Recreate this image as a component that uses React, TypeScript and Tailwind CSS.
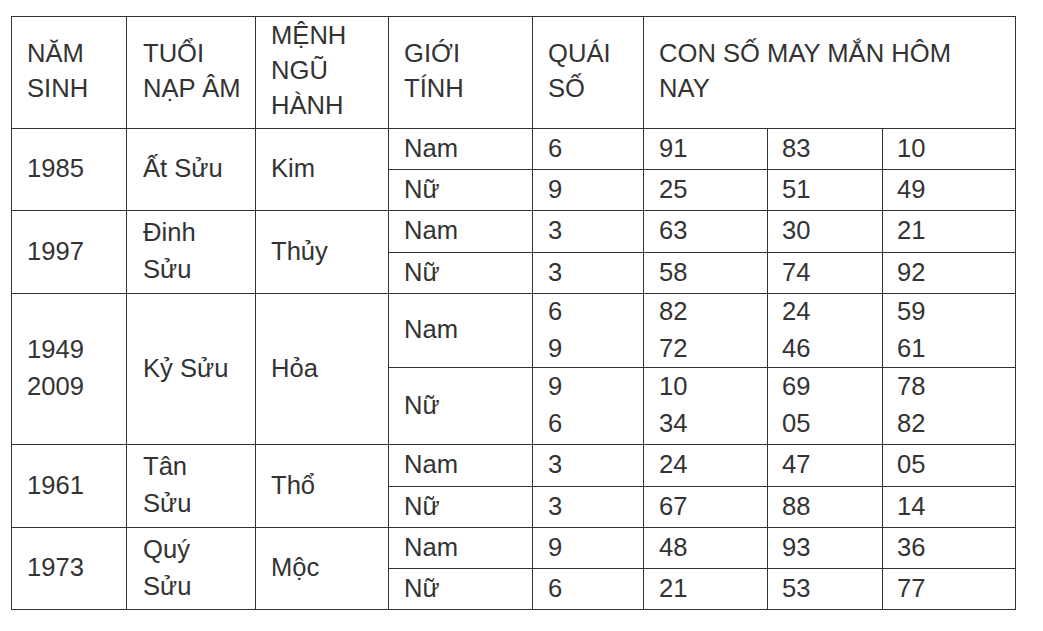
import React from "react";

type Cell = {
  lines: string[];
  col: number;
  rowSpan?: number;
  colSpan?: number;
  header?: boolean;
};

const padByCol: Record<number, string> = {
  1: "pl-[15px]",
  2: "pl-[16px]",
  3: "pl-[15px]",
  4: "pl-[15px]",
  5: "pl-[15px]",
  6: "pl-[15px]",
  7: "pl-[14px]",
  8: "pl-[14px]",
};

function C({ lines, col, rowSpan, colSpan, header }: Cell) {
  const span =
    (rowSpan === 2 ? "row-span-2 " : "") + (colSpan === 3 ? "col-span-3 " : "");
  return (
    <div
      className={
        span +
        "bg-white flex flex-col justify-center pr-[8px] " +
        padByCol[col] +
        (header ? " leading-[35px] pb-[4px]" : " leading-[37px] pb-[2px]")
      }
    >
      {lines.map((l, i) => (
        <div key={i} className="whitespace-nowrap">
          {l}
        </div>
      ))}
    </div>
  );
}

function nums(col: number, vals: string[]) {
  return vals.map((v, i) => <C key={col + "-" + i} col={col + i} lines={[v]} />);
}

export default function App() {
  return (
    <div className="min-h-[631px] w-[1043px] bg-white pt-[16px] pl-[11px]">
      <div
        className="grid w-fit grid-cols-[114px_128px_132px_143px_110px_123px_114px_132px] grid-rows-[111px_40px_40px_41px_40px_73px_76px_41px_40px_40px_40px] gap-px bg-[#333333] p-px text-[25.6px] text-[#333333]"
        style={{ fontFamily: '"Liberation Sans", Arial, sans-serif' }}
      >
        <C header col={1} lines={["NĂM", "SINH"]} />
        <C header col={2} lines={["TUỔI", "NẠP ÂM"]} />
        <C header col={3} lines={["MỆNH", "NGŨ", "HÀNH"]} />
        <C header col={4} lines={["GIỚI", "TÍNH"]} />
        <C header col={5} lines={["QUÁI", "SỐ"]} />
        <C header col={6} colSpan={3} lines={["CON SỐ MAY MẮN HÔM", "NAY"]} />

        <C col={1} rowSpan={2} lines={["1985"]} />
        <C col={2} rowSpan={2} lines={["Ất Sửu"]} />
        <C col={3} rowSpan={2} lines={["Kim"]} />
        <C col={4} lines={["Nam"]} />
        <C col={5} lines={["6"]} />
        {nums(6, ["91", "83", "10"])}
        <C col={4} lines={["Nữ"]} />
        <C col={5} lines={["9"]} />
        {nums(6, ["25", "51", "49"])}

        <C col={1} rowSpan={2} lines={["1997"]} />
        <C col={2} rowSpan={2} lines={["Đinh", "Sửu"]} />
        <C col={3} rowSpan={2} lines={["Thủy"]} />
        <C col={4} lines={["Nam"]} />
        <C col={5} lines={["3"]} />
        {nums(6, ["63", "30", "21"])}
        <C col={4} lines={["Nữ"]} />
        <C col={5} lines={["3"]} />
        {nums(6, ["58", "74", "92"])}

        <C col={1} rowSpan={2} lines={["1949", "2009"]} />
        <C col={2} rowSpan={2} lines={["Kỷ Sửu"]} />
        <C col={3} rowSpan={2} lines={["Hỏa"]} />
        <C col={4} lines={["Nam"]} />
        <C col={5} lines={["6", "9"]} />
        <C col={6} lines={["82", "72"]} />
        <C col={7} lines={["24", "46"]} />
        <C col={8} lines={["59", "61"]} />
        <C col={4} lines={["Nữ"]} />
        <C col={5} lines={["9", "6"]} />
        <C col={6} lines={["10", "34"]} />
        <C col={7} lines={["69", "05"]} />
        <C col={8} lines={["78", "82"]} />

        <C col={1} rowSpan={2} lines={["1961"]} />
        <C col={2} rowSpan={2} lines={["Tân", "Sửu"]} />
        <C col={3} rowSpan={2} lines={["Thổ"]} />
        <C col={4} lines={["Nam"]} />
        <C col={5} lines={["3"]} />
        {nums(6, ["24", "47", "05"])}
        <C col={4} lines={["Nữ"]} />
        <C col={5} lines={["3"]} />
        {nums(6, ["67", "88", "14"])}

        <C col={1} rowSpan={2} lines={["1973"]} />
        <C col={2} rowSpan={2} lines={["Quý", "Sửu"]} />
        <C col={3} rowSpan={2} lines={["Mộc"]} />
        <C col={4} lines={["Nam"]} />
        <C col={5} lines={["9"]} />
        {nums(6, ["48", "93", "36"])}
        <C col={4} lines={["Nữ"]} />
        <C col={5} lines={["6"]} />
        {nums(6, ["21", "53", "77"])}
      </div>
    </div>
  );
}
